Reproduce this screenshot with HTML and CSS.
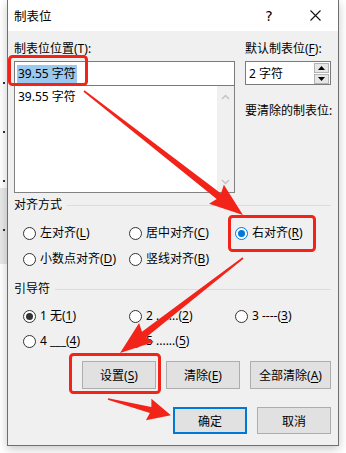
FILE: index.html
```html
<!DOCTYPE html>
<html lang="zh-CN">
<head>
    <meta charset="UTF-8">
    <meta name="viewport" content="width=device-width, initial-scale=1.0">
    <title>制表位</title>
    <link rel="stylesheet" href="styles.css">
</head>
<body>
    <div class="screen">
        <!-- bits of the document behind the dialog -->
        <div class="behind">
            <span class="speck s1"></span>
            <span class="speck s2"></span>
            <span class="speck s3"></span>
            <div class="behind-block"><span class="speck s4"></span></div>
        </div>

        <div class="dialog">
            <header class="titlebar">
                <span class="title">制表位</span>
                <span class="help">?</span>
                <span class="close">
                    <svg width="11" height="11" viewBox="0 0 11 11"><path d="M0.5 0.5 L10.5 10.5 M10.5 0.5 L0.5 10.5" stroke="#111" stroke-width="1.1" fill="none"/></svg>
                </span>
            </header>

            <div class="body">
                <div class="top">
                    <div class="pos-col">
                        <div class="label">制表位位置(<u>T</u>):</div>
                        <div class="edit"><span class="sel">39.55 字符</span></div>
                        <div class="list">
                            <div class="list-items">
                                <div class="list-item">39.55 字符</div>
                            </div>
                            <div class="vscroll">
                                <svg width="9" height="6" viewBox="0 0 9 6"><path d="M1 5 L4.5 1.5 L8 5" stroke="#c2c2c2" stroke-width="1.4" fill="none"/></svg>
                                <svg width="9" height="6" viewBox="0 0 9 6"><path d="M1 1 L4.5 4.5 L8 1" stroke="#c2c2c2" stroke-width="1.4" fill="none"/></svg>
                            </div>
                        </div>
                    </div>

                    <div class="default-col">
                        <div class="label">默认制表位(<u>F</u>):</div>
                        <div class="spin">
                            <span class="spin-text">2 字符</span>
                            <div class="spin-btns">
                                <span class="spin-btn"><svg width="7" height="4" viewBox="0 0 7 4"><path d="M0 4 L3.5 0 L7 4 Z" fill="#000"/></svg></span>
                                <span class="spin-btn"><svg width="7" height="4" viewBox="0 0 7 4"><path d="M0 0 L7 0 L3.5 4 Z" fill="#000"/></svg></span>
                            </div>
                        </div>
                        <div class="label clear-label">要清除的制表位:</div>
                    </div>
                </div>

                <!-- Alignment -->
                <div class="group-title">对齐方式</div>
                <div class="radio-grid align-grid">
                    <div class="radio"><span class="ring"></span><span>左对齐(<u>L</u>)</span></div>
                    <div class="radio"><span class="ring"></span><span>居中对齐(<u>C</u>)</span></div>
                    <div class="radio"><span class="ring on-blue"></span><span>右对齐(<u>R</u>)</span></div>
                    <div class="radio"><span class="ring"></span><span>小数点对齐(<u>D</u>)</span></div>
                    <div class="radio"><span class="ring"></span><span>竖线对齐(<u>B</u>)</span></div>
                </div>

                <!-- Leader -->
                <div class="group-title leader-title">引导符</div>
                <div class="radio-grid leader-grid">
                    <div class="radio"><span class="ring on-dark"></span><span>1 无(<u>1</u>)</span></div>
                    <div class="radio"><span class="ring"></span><span>2 .......(<u>2</u>)</span></div>
                    <div class="radio"><span class="ring"></span><span>3 ----(<u>3</u>)</span></div>
                    <div class="radio"><span class="ring"></span><span>4 ___(<u>4</u>)</span></div>
                    <div class="radio"><span class="ring"></span><span>5 ......(<u>5</u>)</span></div>
                </div>

                <div class="btn-row">
                    <button class="btn">设置(<u>S</u>)</button>
                    <button class="btn">清除(<u>E</u>)</button>
                    <button class="btn btn-wide">全部清除(<u>A</u>)</button>
                </div>

                <div class="btn-row ok-row">
                    <button class="btn btn-default">确定</button>
                    <button class="btn">取消</button>
                </div>
            </div>
        </div>
    </div>

    <!-- red annotations drawn over the screenshot -->
    <svg class="annot" width="346" height="453" viewBox="0 0 346 453">
        <g fill="none" stroke="#f2241a" stroke-width="3">
            <rect x="9.5" y="56.5" width="77" height="28" rx="3"/>
            <rect x="229.5" y="216.5" width="85" height="34" rx="3"/>
            <rect x="70.5" y="354.5" width="89" height="38" rx="3"/>
        </g>
        <g fill="#f2241a">
            <polygon transform="translate(84,91) rotate(37.95)" points="0,-0.8 171,-3.5 168,-12 201.6,0 168,12 171,3.5 0,0.8"/>
            <polygon transform="translate(243,258) rotate(142.3)" points="0,-0.8 125,-3.5 122,-12 155.4,0 122,12 125,3.5 0,0.8"/>
            <polygon transform="translate(108,399) rotate(14.5)" points="0,-0.8 44,-3 42,-11 65,0 42,11 44,3 0,0.8"/>
        </g>
    </svg>
</body>
</html>
```

FILE: styles.css
```css
/* Tab stops dialog */
* {
    box-sizing: border-box;
    margin: 0;
    padding: 0;
}

body {
    width: 346px;
    height: 453px;
    overflow: hidden;
    position: relative;
    background: #fff;
    font-family: "Noto Sans", "Noto Sans CJK SC", sans-serif;
    font-size: 12px;
    color: #000;
}

u {
    text-decoration: underline;
    text-underline-offset: 2px;
    text-decoration-thickness: 1px;
}

.screen {
    display: flex;
}

/* Document behind */
.behind {
    width: 7px;
    display: flex;
    flex-direction: column;
}

.speck {
    display: block;
    width: 2px;
    height: 2px;
    margin-left: 3px;
    background: #333;
}

.s1 { margin-top: 82px; }
.s2 { margin-top: 47px; }
.s3 { margin-top: 47px; }

.behind-block {
    margin-top: 6px;
    height: 76px;
    background: #e8e8e8;
    display: flex;
    flex-direction: column;
}

.s4 { margin-top: 41px; }

/* Dialog frame */
.dialog {
    width: 332px;
    height: 446px;
    border: 1px solid #6f6f6f;
    border-top: none;
    background: #f0f0f0;
    box-shadow: 0 3px 9px rgba(0, 0, 0, 0.22);
    display: flex;
    flex-direction: column;
}

.titlebar {
    height: 31px;
    background: #fff;
    display: flex;
    align-items: center;
    padding-left: 6px;
}

.title {
    flex: 1;
    font-size: 12.5px;
}

.help,
.close {
    width: 46px;
    display: flex;
    justify-content: center;
    align-items: center;
}

.help {
    font-family: "DejaVu Sans", sans-serif;
    font-size: 14px;
}

.body {
    padding: 10px 7px 0 6px;
}

/* Top area */
.top {
    display: flex;
    gap: 10px;
}

.pos-col {
    width: 221px;
}

.default-col {
    width: 86px;
}

.label {
    line-height: 16px;
    margin-bottom: 4px;
    white-space: nowrap;
}

.edit {
    height: 25px;
    border: 1px solid #7a7a7a;
    background: #fff;
    display: flex;
    align-items: center;
    padding-left: 2px;
}

.sel {
    background: #99c9ef;
    line-height: 18px;
    padding: 0 1px;
}

.list {
    height: 107px;
    border: 1px solid #828282;
    border-top: none;
    background: #fff;
    display: flex;
}

.list-items {
    flex: 1;
    padding: 3px 0 0 3px;
}

.list-item {
    line-height: 16px;
}

.vscroll {
    width: 17px;
    background: #f0f0f0;
    display: flex;
    flex-direction: column;
    justify-content: space-between;
    align-items: center;
    padding: 8px 0 7px;
}

.spin {
    margin-top: 1px;
    height: 24px;
    border: 1px solid #7a7a7a;
    background: #fff;
    display: flex;
    align-items: center;
    justify-content: space-between;
    padding: 0 1px 0 3px;
}

.spin-btns {
    display: flex;
    flex-direction: column;
    gap: 1px;
}

.spin-btn {
    width: 15px;
    height: 10px;
    background: #e6e6e6;
    border: 1px solid #b4b4b4;
    display: flex;
    align-items: center;
    justify-content: center;
}

.clear-label {
    margin-top: 18px;
}

/* Groups */
.group-title {
    margin-top: 4px;
    line-height: 16px;
    display: flex;
    align-items: center;
    gap: 5px;
}

.group-title::after {
    content: "";
    flex: 1;
    height: 1px;
    background: #dcdcdc;
}

.leader-title {
    margin-top: 14px;
}

.radio-grid {
    display: grid;
    grid-template-columns: repeat(3, 106px);
    margin-left: 9px;
    row-gap: 10px;
}

.align-grid {
    margin-top: 12px;
}

.leader-grid {
    margin-top: 11px;
    row-gap: 9px;
}

.radio {
    display: flex;
    align-items: center;
    gap: 4px;
    line-height: 16px;
    white-space: nowrap;
}

.ring {
    width: 13px;
    height: 13px;
    border: 1px solid #333;
    border-radius: 50%;
    background: #fff;
    display: flex;
    align-items: center;
    justify-content: center;
}

.ring.on-blue {
    border-color: #0078d7;
}

.ring.on-blue::after,
.ring.on-dark::after {
    content: "";
    width: 7px;
    height: 7px;
    border-radius: 50%;
    background: #0078d7;
}

.ring.on-dark::after {
    background: #333;
}

/* Buttons */
.btn-row {
    margin-top: 12px;
    display: flex;
    justify-content: flex-end;
    gap: 10px;
}

.ok-row {
    margin-top: 18px;
}

.btn {
    width: 74px;
    height: 28px;
    background: #e1e1e1;
    border: 1px solid #adadad;
    font-family: inherit;
    font-size: 12px;
    color: #000;
}

.btn-wide {
    width: 81px;
}

.ok-row .btn {
    height: 27px;
}

.btn-default {
    border: 2px solid #0078d7;
}

/* Annotations */
.annot {
    position: absolute;
    top: 0;
    left: 0;
    pointer-events: none;
}
```
